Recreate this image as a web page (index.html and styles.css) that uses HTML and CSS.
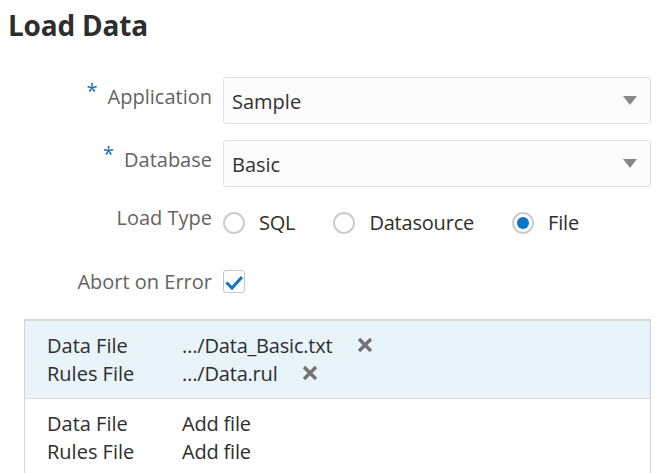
FILE: index.html
```html
<!DOCTYPE html>
<html lang="en">
<head>
<meta charset="utf-8">
<title>Load Data</title>
<link rel="stylesheet" href="styles.css">
</head>
<body>
<h1 class="title">Load Data</h1>
<div class="form">
  <div class="row row-app">
    <div class="label"><span class="req">*</span>Application</div>
    <div class="select"><span class="select-value">Sample</span><span class="caret"></span></div>
  </div>
  <div class="row row-db">
    <div class="label"><span class="req">*</span>Database</div>
    <div class="select"><span class="select-value">Basic</span><span class="caret"></span></div>
  </div>
  <div class="row row-type">
    <div class="label">Load Type</div>
    <div class="radios">
      <label class="radio"><span class="radio-circle"></span><span class="radio-text">SQL</span></label>
      <label class="radio"><span class="radio-circle"></span><span class="radio-text">Datasource</span></label>
      <label class="radio"><span class="radio-circle checked"></span><span class="radio-text">File</span></label>
    </div>
  </div>
  <div class="row row-abort">
    <div class="label">Abort on Error</div>
    <div class="checkbox">
      <svg width="20" height="20" viewBox="0 0 20 20"><path d="M3.5 10.5 L8 15 L17 5" fill="none" stroke="#1274c0" stroke-width="3" stroke-linecap="square" stroke-linejoin="miter"/></svg>
    </div>
  </div>
</div>
<div class="panel">
  <div class="group group-selected">
    <div class="frow"><span class="fname">Data File</span><span class="fval">…/Data_Basic.txt</span><span class="remove"><svg width="16" height="16" viewBox="0 0 16 16"><path d="M2 2 L14 14 M14 2 L2 14" stroke="#727272" stroke-width="3.4"/></svg></span></div>
    <div class="frow"><span class="fname">Rules File</span><span class="fval">…/Data.rul</span><span class="remove"><svg width="16" height="16" viewBox="0 0 16 16"><path d="M2 2 L14 14 M14 2 L2 14" stroke="#727272" stroke-width="3.4"/></svg></span></div>
  </div>
  <div class="group group-empty">
    <div class="frow"><span class="fname">Data File</span><span class="fval">Add file</span></div>
    <div class="frow"><span class="fname">Rules File</span><span class="fval">Add file</span></div>
  </div>
</div>
</body>
</html>
```
FILE: styles.css
```css
html, body {
  margin: 0;
  padding: 0;
  background: #ffffff;
}
body {
  font-family: "Open Sans", "Noto Sans", sans-serif;
  font-size: 20px;
  color: #333333;
  height: 473px;
  overflow: hidden;
}
.title {
  margin: 8px 0 0 8px;
  font-size: 28px;
  line-height: 34px;
  font-weight: 700;
  color: #2e2e2e;
  letter-spacing: -0.2px;
}
.form {
  display: flex;
  flex-direction: column;
}
.row {
  display: grid;
  grid-template-columns: 212px 428px;
  column-gap: 11px;
  align-items: start;
}
.row-app { margin-top: 35px; }
.row-db { margin-top: 16px; }
.row-type { margin-top: 21px; }
.row-abort { margin-top: 38px; }
.label {
  text-align: right;
  color: #636363;
  line-height: 20px;
  white-space: nowrap;
}
.row-app .label, .row-db .label { padding-top: 4px; }
.req {
  color: #1a6fb3;
  vertical-align: 6px;
  margin-right: 10px;
}
.select {
  box-sizing: border-box;
  height: 47px;
  border: 1px solid #e0e0e0;
  border-radius: 3px;
  background: #fcfcfc;
  display: flex;
  align-items: center;
  justify-content: space-between;
  padding: 3px 13px 0 8px;
}
.select-value {
  color: #333333;
  line-height: 24px;
}
.caret {
  width: 0;
  height: 0;
  border-left: 7px solid transparent;
  border-right: 7px solid transparent;
  border-top: 9px solid #878787;
  margin-top: -3px;
}
.radios {
  display: flex;
  gap: 38px;
  padding-top: 4px;
}
.radio {
  display: flex;
  align-items: center;
  gap: 14px;
  height: 22px;
}
.radio-circle {
  box-sizing: border-box;
  width: 22px;
  height: 22px;
  border: 2px solid #cccccc;
  border-radius: 50%;
  background: #ffffff;
  display: flex;
  align-items: center;
  justify-content: center;
}
.radio-circle.checked::after {
  content: "";
  width: 12px;
  height: 12px;
  border-radius: 50%;
  background: #0a74c8;
}
.radio-text {
  line-height: 22px;
  color: #2e2e2e;
  letter-spacing: -0.2px;
}
.checkbox {
  box-sizing: border-box;
  width: 22px;
  height: 23px;
  margin-top: -2px;
  border: 1px solid #c6c6c6;
  border-radius: 3px;
  background: #ffffff;
  display: flex;
  align-items: center;
  justify-content: center;
}
.checkbox svg { display: block; margin-top: 2px; }
.panel {
  box-sizing: border-box;
  margin: 26px 0 0 24px;
  width: 627px;
  height: 160px;
  border: 1px solid #d4d4d4;
  border-top: 2px solid #d8d8d8;
  border-bottom: none;
}
.group {
  padding-left: 22px;
}
.group-selected {
  background: #e8f3fa;
  padding-top: 10px;
  padding-bottom: 11px;
  border-bottom: 1px solid #dcdcdc;
}
.group-empty {
  padding-top: 10px;
}
.frow {
  display: flex;
  align-items: center;
  height: 28px;
  color: #2e2e2e;
}
.fname {
  width: 135px;
  flex: none;
}
.fval {
  letter-spacing: -0.2px;
}
.remove {
  margin-left: 24px;
  display: flex;
  align-items: center;
}
.remove svg { display: block; }
```
